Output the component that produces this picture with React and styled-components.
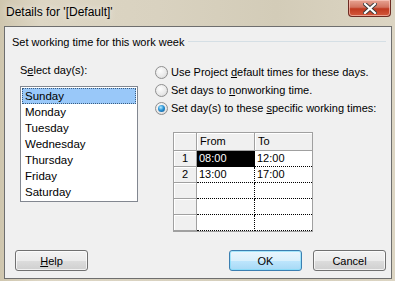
import React from 'react';
import styled, { createGlobalStyle } from 'styled-components';

const GlobalStyle = createGlobalStyle`
  html, body { margin: 0; padding: 0; }
  body { font-family: Tahoma, "Liberation Sans", "DejaVu Sans", sans-serif; }
`;

const days = ['Sunday', 'Monday', 'Tuesday', 'Wednesday', 'Thursday', 'Friday', 'Saturday'];
const rows = [
  ['1', '08:00', '12:00'],
  ['2', '13:00', '17:00'],
  ['', '', ''],
  ['', '', ''],
  ['', '', ''],
];

function App() {
  return (
    <>
      <GlobalStyle />
      <Window>
        <TitleBar>
          <Title>Details for '[Default]'</Title>
          <CloseButton>
            <svg width="14" height="11" viewBox="0 0 14 11">
              <path d="M2 1 L12 10 M12 1 L2 10" stroke="#3a3a3a" strokeWidth="4" strokeLinecap="square" />
              <path d="M2 1 L12 10 M12 1 L2 10" stroke="#ffffff" strokeWidth="2.2" strokeLinecap="square" />
            </svg>
          </CloseButton>
        </TitleBar>
        <Client>
          <GroupHeader>
            <span>Set working time for this work week</span>
            <GroupLine />
          </GroupHeader>
          <Body>
            <LeftCol>
              <Label>S<u>e</u>lect day(s):</Label>
              <ListBox>
                {days.map((d, i) => (
                  <ListItem key={d} $selected={i === 0}>{d}</ListItem>
                ))}
              </ListBox>
            </LeftCol>
            <RightCol>
              <RadioRow>
                <Radio />
                <span>Use Project <u>d</u>efault times for these days.</span>
              </RadioRow>
              <RadioRow>
                <Radio />
                <span>Set days to <u>n</u>onworking time.</span>
              </RadioRow>
              <RadioRow>
                <Radio $checked />
                <span>Set day(s) to these <u>s</u>pecific working times:</span>
              </RadioRow>
              <TimeGrid>
                <HeadCell $corner />
                <HeadCell>From</HeadCell>
                <HeadCell $last>To</HeadCell>
                {rows.map((r, i) => (
                  <React.Fragment key={i}>
                    <RowHead>{r[0]}</RowHead>
                    <DataCell $active={i === 0} $first>{r[1]}</DataCell>
                    <DataCell>{r[2]}</DataCell>
                  </React.Fragment>
                ))}
              </TimeGrid>
            </RightCol>
          </Body>
          <Footer>
            <Button><u>H</u>elp</Button>
            <Spacer />
            <Button $default>OK</Button>
            <Button>Cancel</Button>
          </Footer>
        </Client>
      </Window>
    </>
  );
}

const Window = styled.div`
  width: 395px;
  height: 281px;
  box-sizing: border-box;
  display: flex;
  flex-direction: column;
  padding: 0 3px 2px 4px;
  background: linear-gradient(90deg, #cfc6ae 0%, #ddd6c4 10%, #d9d2c0 40%, #d3ccb8 70%, #dcd5c3 100%);
  overflow: hidden;
`;

const TitleBar = styled.div`
  height: 26px;
  display: flex;
  justify-content: space-between;
  align-items: flex-start;
`;

const Title = styled.div`
  font-family: "Liberation Sans", sans-serif;
  font-size: 12px;
  color: #000;
  margin: 5px 0 0 2px;
  text-shadow: 0 0 6px rgba(255, 255, 255, 0.9);
`;

const CloseButton = styled.div`
  width: 43px;
  height: 17px;
  margin-right: 1px;
  box-sizing: border-box;
  border: 1px solid #6d2b22;
  border-top: none;
  border-radius: 0 0 4px 4px;
  background: linear-gradient(180deg, #e8a493 0%, #d2735f 45%, #c0391f 55%, #d4593d 100%);
  box-shadow: inset 0 0 0 1px rgba(255, 210, 200, 0.6);
  display: flex;
  align-items: center;
  justify-content: center;
`;

const Client = styled.div`
  flex: 1;
  border: 1px solid #6e6e6e;
  background: #f0f0f0;
  display: flex;
  flex-direction: column;
  padding: 7px 5px 0 7px;
  font-size: 11px;
  color: #000;
`;

const GroupHeader = styled.div`
  display: flex;
  align-items: center;
  height: 15px;
  white-space: nowrap;
`;

const GroupLine = styled.div`
  flex: 1;
  height: 1px;
  margin-left: 4px;
  background: #d5dfe5;
`;

const Body = styled.div`
  display: flex;
  margin-top: 14px;
`;

const LeftCol = styled.div`
  width: 118px;
  flex-shrink: 0;
  margin-left: 8px;
  display: flex;
  flex-direction: column;
`;

const Label = styled.div`
  height: 15px;
  line-height: 15px;
`;

const ListBox = styled.div`
  margin-top: 8px;
  height: 116px;
  box-sizing: border-box;
  border: 1px solid #828790;
  background: #fff;
  padding: 1px;
`;

const ListItem = styled.div`
  height: 16px;
  padding-left: 2px;
  box-sizing: border-box;
  background: ${p => (p.$selected ? '#99c8f9' : 'transparent')};
  border: 1px dotted ${p => (p.$selected ? '#3a5d80' : 'transparent')};
  line-height: 14px;
  font-size: 11.5px;
  color: #000;
`;

const RightCol = styled.div`
  margin-left: 17px;
  display: flex;
  flex-direction: column;
`;

const RadioRow = styled.div`
  display: flex;
  align-items: center;
  gap: 3px;
  height: 18px;
  white-space: nowrap;
  font-size: 11px;
`;

const Radio = styled.span`
  width: 13px;
  height: 13px;
  box-sizing: border-box;
  border-radius: 50%;
  border: 1px solid #8f8f8f;
  background: radial-gradient(circle at 40% 35%, #fdfdfd 0%, #e8e8e8 60%, #cfcfcf 100%);
  position: relative;
  flex-shrink: 0;
  &::after {
    content: '';
    display: ${p => (p.$checked ? 'block' : 'none')};
    position: absolute;
    left: 2px;
    top: 2px;
    width: 7px;
    height: 7px;
    border-radius: 50%;
    background: radial-gradient(circle at 40% 35%, #b9ecff 0%, #2a94d6 45%, #0b4f8c 100%);
  }
`;

const TimeGrid = styled.div`
  margin: 15px 0 0 18px;
  width: 140px;
  box-sizing: border-box;
  display: grid;
  grid-template-columns: 23px 58px 57px;
  grid-template-rows: 18px repeat(5, 16px);
  border: 1px solid #a0a0a0;
  background: #fff;
  font-size: 11px;
`;

const HeadCell = styled.div`
  box-sizing: border-box;
  background: #f0f0f0;
  border-bottom: 1px solid #a0a0a0;
  border-right: ${p => (p.$last ? 'none' : '1px solid #a0a0a0')};
  box-shadow: inset 1px 1px 0 #fff;
  padding-left: 3px;
  line-height: 17px;
`;

const RowHead = styled.div`
  box-sizing: border-box;
  background: #f0f0f0;
  border-bottom: 1px solid #a0a0a0;
  border-right: 1px solid #a0a0a0;
  box-shadow: inset 1px 1px 0 #fff;
  text-align: center;
  line-height: 15px;
`;

const DataCell = styled.div`
  box-sizing: border-box;
  padding-left: 2px;
  border-bottom: 1px dotted #000;
  border-right: ${p => (p.$first ? '1px dotted #000' : 'none')};
  background: ${p => (p.$active ? '#000' : '#fff')};
  color: ${p => (p.$active ? '#fff' : '#000')};
  line-height: 15px;
`;

const Footer = styled.div`
  margin-top: auto;
  margin-bottom: 7px;
  display: flex;
  gap: 11px;
  padding-left: 3px;
`;

const Spacer = styled.div`
  flex: 1;
`;

const Button = styled.div`
  width: 73px;
  height: 21px;
  box-sizing: border-box;
  border: 1px solid ${p => (p.$default ? '#3c7fb1' : '#707070')};
  border-radius: 3px;
  background: ${p =>
    p.$default
      ? 'linear-gradient(180deg, #eaf6fd 0%, #d9f0fc 50%, #bee6fd 50%, #a7d9f5 100%)'
      : 'linear-gradient(180deg, #f2f2f2 0%, #ebebeb 50%, #dddddd 50%, #cfcfcf 100%)'};
  box-shadow: inset 0 0 0 1px ${p => (p.$default ? 'rgba(120,220,250,0.6)' : 'rgba(255,255,255,0.7)')};
  display: flex;
  align-items: center;
  justify-content: center;
  font-size: 11px;
  color: #000;
`;

export default App;
